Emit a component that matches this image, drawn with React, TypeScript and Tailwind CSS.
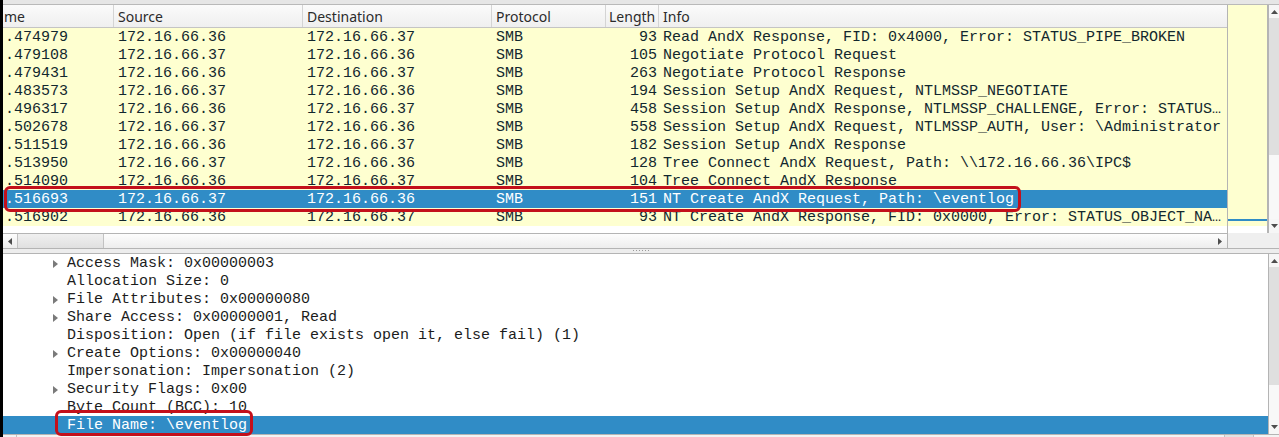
import React from 'react';

type Packet = {
  time: string;
  src: string;
  dst: string;
  proto: string;
  len: string;
  info: string;
  selected?: boolean;
};

const packets: Packet[] = [
  { time: '.474979', src: '172.16.66.36', dst: '172.16.66.37', proto: 'SMB', len: '93', info: 'Read AndX Response, FID: 0x4000, Error: STATUS_PIPE_BROKEN' },
  { time: '.479108', src: '172.16.66.37', dst: '172.16.66.36', proto: 'SMB', len: '105', info: 'Negotiate Protocol Request' },
  { time: '.479431', src: '172.16.66.36', dst: '172.16.66.37', proto: 'SMB', len: '263', info: 'Negotiate Protocol Response' },
  { time: '.483573', src: '172.16.66.37', dst: '172.16.66.36', proto: 'SMB', len: '194', info: 'Session Setup AndX Request, NTLMSSP_NEGOTIATE' },
  { time: '.496317', src: '172.16.66.36', dst: '172.16.66.37', proto: 'SMB', len: '458', info: 'Session Setup AndX Response, NTLMSSP_CHALLENGE, Error: STATUS…' },
  { time: '.502678', src: '172.16.66.37', dst: '172.16.66.36', proto: 'SMB', len: '558', info: 'Session Setup AndX Request, NTLMSSP_AUTH, User: \\Administrator' },
  { time: '.511519', src: '172.16.66.36', dst: '172.16.66.37', proto: 'SMB', len: '182', info: 'Session Setup AndX Response' },
  { time: '.513950', src: '172.16.66.37', dst: '172.16.66.36', proto: 'SMB', len: '128', info: 'Tree Connect AndX Request, Path: \\\\172.16.66.36\\IPC$' },
  { time: '.514090', src: '172.16.66.36', dst: '172.16.66.37', proto: 'SMB', len: '104', info: 'Tree Connect AndX Response' },
  { time: '.516693', src: '172.16.66.37', dst: '172.16.66.36', proto: 'SMB', len: '151', info: 'NT Create AndX Request, Path: \\eventlog', selected: true },
  { time: '.516902', src: '172.16.66.36', dst: '172.16.66.37', proto: 'SMB', len: '93', info: 'NT Create AndX Response, FID: 0x0000, Error: STATUS_OBJECT_NA…' },
];

const details: { text: string; expandable?: boolean; selected?: boolean }[] = [
  { text: 'Access Mask: 0x00000003', expandable: true },
  { text: 'Allocation Size: 0' },
  { text: 'File Attributes: 0x00000080', expandable: true },
  { text: 'Share Access: 0x00000001, Read', expandable: true },
  { text: 'Disposition: Open (if file exists open it, else fail) (1)' },
  { text: 'Create Options: 0x00000040', expandable: true },
  { text: 'Impersonation: Impersonation (2)' },
  { text: 'Security Flags: 0x00', expandable: true },
  { text: 'Byte Count (BCC): 10' },
  { text: 'File Name: \\eventlog', selected: true },
];

// small scrollbar arrow glyph
function Arrow({ dir }: { dir: 'up' | 'down' | 'left' | 'right' }) {
  const pts = {
    up: '0,4 3.5,0 7,4',
    down: '0,0 7,0 3.5,4',
    left: '4,0 4,7 0,3.5',
    right: '0,0 0,7 4,3.5',
  }[dir];
  const horiz = dir === 'left' || dir === 'right';
  return (
    <svg width={horiz ? 4 : 7} height={horiz ? 7 : 4} viewBox={horiz ? '0 0 4 7' : '0 0 7 4'}>
      <polygon points={pts} fill="#4d4d4d" />
    </svg>
  );
}

function VScroll({ thumb }: { thumb: number }) {
  return (
    <div className="flex h-full w-[11px] flex-col border-l border-[#b4b4b4] bg-[#f6f6f6]">
      <div className="flex h-[13px] shrink-0 items-center justify-center">
        <Arrow dir="up" />
      </div>
      <div className="shrink-0 bg-[#dfdfdf]" style={{ height: thumb }} />
      <div className="flex-1 bg-[#f8f8f8]" />
      <div className="flex h-[14px] shrink-0 items-center justify-center">
        <Arrow dir="down" />
      </div>
    </div>
  );
}

function PacketRow({ p }: { p: Packet }) {
  const row = p.selected ? 'bg-[#308cc6] text-white' : 'bg-[#feffd0] text-[#12272e]';
  return (
    <div className={`flex h-[18px] items-start whitespace-nowrap pt-[2px] leading-[16px] ${row}`}>
      <div className="w-[111px] shrink-0 overflow-hidden pl-[2px]">{p.time}</div>
      <div className="w-[189px] shrink-0 overflow-hidden pl-[4px]">{p.src}</div>
      <div className="w-[189px] shrink-0 overflow-hidden pl-[4px]">{p.dst}</div>
      <div className="w-[114px] shrink-0 overflow-hidden pl-[4px]">{p.proto}</div>
      <div className="w-[53px] shrink-0 overflow-hidden pr-[2px] text-right">{p.len}</div>
      <div className="w-[569px] shrink-0 overflow-hidden pl-[4px]">{p.info}</div>
    </div>
  );
}

function HeaderCell({ label, w, right }: { label: string; w: string; right?: boolean }) {
  return (
    <div className={`flex h-full shrink-0 items-center border-r border-[#d4d4d4] ${w} ${right ? 'justify-end pr-[4px]' : 'pl-[4px]'}`}>
      {label}
    </div>
  );
}

function PacketList() {
  return (
    <div className="flex h-[244px]">
      <div className="flex w-[1225px] flex-col border-r border-[#b4b4b4]">
        <div className="flex h-[228px] flex-col overflow-hidden bg-white">
          <div className="flex h-[23px] shrink-0 border-b border-[#c4c4c4] bg-gradient-to-b from-[#fbfbfb] to-[#efefef] font-['Noto_Sans',sans-serif] text-[14px] text-[#2b2b2b]">
            <div className="flex h-full w-[111px] shrink-0 items-center border-r border-[#d4d4d4] pl-[1px]">me</div>
            <HeaderCell label="Source" w="w-[189px]" />
            <HeaderCell label="Destination" w="w-[189px]" />
            <HeaderCell label="Protocol" w="w-[114px]" />
            <div className="flex h-full w-[53px] shrink-0 items-center border-r border-[#d4d4d4] pl-[3px]">Length</div>
            <div className="flex h-full flex-1 items-center pl-[4px]">Info</div>
          </div>
          <div className="font-['Liberation_Mono',monospace] text-[15px]">
            {packets.map((p) => (
              <PacketRow key={p.time} p={p} />
            ))}
          </div>
        </div>
        {/* horizontal scrollbar */}
        <div className="flex h-[16px] border-y border-[#b4b4b4] bg-gradient-to-b from-[#fdfdfd] to-[#ededed]">
          <div className="flex w-[14px] items-center justify-center">
            <Arrow dir="left" />
          </div>
          <div className="w-[87px] border-x border-[#c2c2c2] bg-gradient-to-b from-[#f0f0f0] to-[#e0e0e0]" />
          <div className="flex-1" />
          <div className="flex w-[15px] items-center justify-center">
            <Arrow dir="right" />
          </div>
        </div>
      </div>
      <div className="flex flex-1 flex-col">
        <div className="flex h-[228px]">
          {/* minimap */}
          <div className="flex w-[40px] flex-col border-r border-[#b4b4b4] bg-white">
            <div className="h-[214px] bg-[#feffd0]" />
            <div className="h-[2px] bg-[#308cc6]" />
            <div className="h-[5px] bg-[#feffd0]" />
            <div className="flex-1" />
          </div>
          <VScroll thumb={137} />
        </div>
        <div className="h-[16px] border-b border-[#b4b4b4] bg-[#efefef]" />
      </div>
    </div>
  );
}

function Splitter() {
  return (
    <div className="flex h-[5px] items-start justify-center border-b border-[#b4b4b4] bg-[#ededed] pt-[1px]">
      <div className="flex gap-[2px]">
        {[0, 1, 2, 3, 4, 5].map((i) => (
          <div key={i} className="h-[1px] w-[1px] bg-[#9a9a9a]" />
        ))}
      </div>
    </div>
  );
}

function Details() {
  return (
    <div className="flex h-[180px]">
      <div className="flex-1 overflow-hidden bg-white font-['Liberation_Mono',monospace] text-[15px]">
        {details.map((d) => (
          <div
            key={d.text}
            className={`flex h-[18px] items-start whitespace-nowrap pt-[2px] leading-[16px] ${d.selected ? 'bg-[#308cc6] text-white' : 'text-[#1c1c1c]'}`}
          >
            <div className="w-[50px] shrink-0" />
            <div className="flex h-[16px] w-[14px] shrink-0 items-center">
              {d.expandable && (
                <svg width="5" height="8" viewBox="0 0 5 8">
                  <polygon points="0,0 0,8 5,4" fill="#7a7a7a" />
                </svg>
              )}
            </div>
            <span>{d.text}</span>
          </div>
        ))}
      </div>
      <VScroll thumb={118} />
    </div>
  );
}

export default function App() {
  return (
    <div className="relative flex h-[437px] w-[1279px] overflow-hidden bg-[#efefef]">
      <div className="w-[3px] shrink-0 bg-black" />
      <div className="flex flex-1 flex-col">
        <div className="h-[5px] border-b border-[#b9b9b9] bg-[#e6e6e6]" />
        <PacketList />
        <Splitter />
        <Details />
        <div className="flex h-[3px] border-t border-[#b4b4b4] bg-[#f3f3f3]">
          <div className="w-[14px] border-r border-[#c2c2c2]" />
          <div className="flex-1" />
          <div className="w-[30px] border-x border-[#c2c2c2] bg-[#e2e2e2]" />
          <div className="w-[25px]" />
        </div>
      </div>

      {/* red annotation boxes */}
      <div className="absolute left-[4px] top-[186px] h-[26px] w-[1017px] rounded-[6px] border-[3px] border-[#c3101b]" />
      <div className="absolute left-[55px] top-[410px] h-[26px] w-[198px] rounded-[6px] border-[3px] border-[#c3101b]" />
    </div>
  );
}
